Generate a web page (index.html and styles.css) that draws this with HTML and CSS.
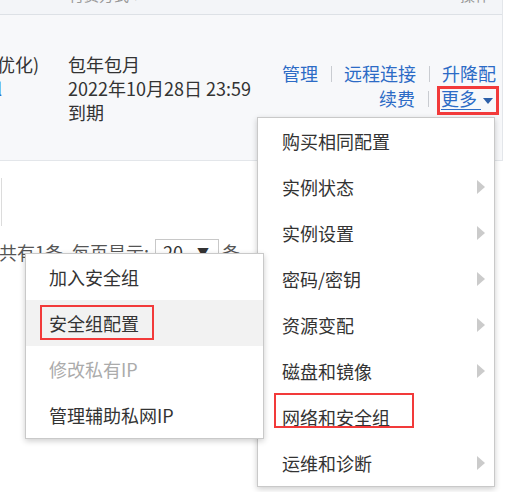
FILE: index.html
```html
<!DOCTYPE html>
<html lang="zh-CN">
<head>
<meta charset="utf-8">
<title>实例列表</title>
<link rel="stylesheet" href="styles.css">
</head>
<body>
<div class="page">
  <div class="table">
    <div class="thead">
      <span class="th th-pay">付费方式 ▾</span>
      <span class="th th-op">操作</span>
    </div>
    <div class="row">
      <div class="col c1">
        <div>优化)</div>
        <div class="link">l</div>
      </div>
      <div class="col c2">
        <div>包年包月</div>
        <div class="date">2022年10月28日 23:59</div>
        <div>到期</div>
      </div>
      <div class="col c3">
        <div class="ops">
          <a class="link">管理</a><i class="sep"></i><a class="link">远程连接</a><i class="sep"></i><a class="link">升降配</a>
        </div>
        <div class="ops">
          <a class="link">续费</a><i class="sep"></i><a class="link more">更多 <span class="caret"></span></a>
        </div>
      </div>
    </div>
  </div>

  <div class="below">
    <div class="stub"></div>
    <div class="pager">
      <div class="ptext"><span>共有1条, 每页显示:</span></div>
      <div class="select"><span>20</span><span class="sel-caret">▼</span></div>
      <span class="unit">条</span>
    </div>
  </div>

  <ul class="menu menu-main">
    <li class="item">购买相同配置</li>
    <li class="item">实例状态<i class="chev"></i></li>
    <li class="item">实例设置<i class="chev"></i></li>
    <li class="item">密码/密钥<i class="chev"></i></li>
    <li class="item">资源变配<i class="chev"></i></li>
    <li class="item">磁盘和镜像<i class="chev"></i></li>
    <li class="item">网络和安全组</li>
    <li class="item">运维和诊断<i class="chev"></i></li>
  </ul>

  <ul class="menu menu-sub">
    <li class="item">加入安全组</li>
    <li class="item active">安全组配置</li>
    <li class="item disabled">修改私有IP</li>
    <li class="item">管理辅助私网IP</li>
  </ul>

  <div class="mark mark-more"></div>
  <div class="mark mark-sg"></div>
  <div class="mark mark-net"></div>
</div>
</body>
</html>
```

FILE: styles.css
```css
* { box-sizing: border-box; }
html, body {
  margin: 0;
  padding: 0;
  background: #fff;
}
body {
  font-family: "Noto Sans CJK SC", "Microsoft YaHei", sans-serif;
  color: #333;
}
.page {
  position: relative;
  width: 508px;
  height: 492px;
  overflow: hidden;
}

/* table */
.table {
  width: 503px;
  border-right: 1px solid #e3e6ea;
}
.thead {
  display: flex;
  align-items: flex-start;
  height: 15px;
  background: #f3f5f8;
  border-bottom: 1px solid #dde1e6;
  overflow: hidden;
}
.th {
  font-size: 15px;
  line-height: 20px;
  margin-top: -15px;
  color: #999;
  white-space: nowrap;
}
.th-pay { margin-left: 69px; }
.th-op { margin-left: auto; margin-right: 12px; }

.row {
  display: flex;
  height: 146px;
  background: #f7f8fa;
  border-bottom: 1px solid #e3e6ea;
  font-size: 18px;
}
.col { white-space: nowrap; }
.c1 {
  width: 71px;
  margin-left: -3px;
  padding-top: 37px;
  line-height: 24px;
}
.c2 {
  padding-top: 37px;
  line-height: 24px;
}
.c3 {
  margin-left: auto;
  padding-top: 46px;
  padding-right: 6px;
  line-height: 25px;
}
.ops {
  display: flex;
  justify-content: flex-end;
  align-items: center;
}
.link { color: #2c6bc6; text-decoration: none; }
.sep {
  display: inline-block;
  width: 1px;
  height: 16px;
  background: #c9ccd1;
  margin: 0 12px 0 13px;
}
.more {
  text-decoration: underline;
  text-decoration-color: #2c6bc6;
  text-underline-offset: 3px;
}
.caret {
  display: inline-block;
  width: 0;
  height: 0;
  margin-left: 2px;
  margin-right: 3px;
  vertical-align: middle;
  border-left: 5px solid transparent;
  border-right: 5px solid transparent;
  border-top: 6px solid #2c5fa8;
}

/* below table */
.below {
  padding-top: 17px;
}
.stub {
  width: 2px;
  height: 48px;
  border-right: 1px solid #dcdcdc;
}
.pager {
  display: flex;
  align-items: center;
  height: 26px;
  margin-top: 13px;
  font-size: 18px;
  color: #555;
}
.ptext {
  display: flex;
  justify-content: flex-end;
  width: 149px;
  margin-right: 6px;
  white-space: nowrap;
  line-height: 26px;
}
.select {
  display: flex;
  align-items: center;
  justify-content: space-between;
  width: 64px;
  height: 26px;
  padding: 0 9px 0 7px;
  border: 1px solid #c8c8c8;
  color: #333;
  line-height: 24px;
}
.sel-caret {
  font-size: 12px;
  color: #333;
}
.unit {
  margin-left: 3px;
  line-height: 26px;
}

/* dropdown menus */
.menu {
  position: absolute;
  margin: 0;
  padding: 0;
  list-style: none;
  background: #fff;
  border: 1px solid #c9c9c9;
  box-shadow: 0 2px 6px rgba(0, 0, 0, 0.2);
  font-size: 18px;
  color: #333;
}
.menu-main {
  left: 257px;
  top: 117px;
  width: 238px;
  z-index: 2;
}
.menu-sub {
  left: 25px;
  top: 253px;
  width: 239px;
  z-index: 3;
}
.item {
  display: flex;
  align-items: center;
  justify-content: space-between;
  height: 46px;
  padding: 0 9px 0 24px;
  white-space: nowrap;
}
.menu-sub .item { padding-left: 23px; }
.item.active { background: #f2f2f2; }
.item.disabled { color: #ababab; }
.chev {
  display: inline-block;
  width: 0;
  height: 0;
  border-left: 8px solid #cbcbcb;
  border-top: 7px solid transparent;
  border-bottom: 7px solid transparent;
}

/* annotation boxes */
.mark {
  position: absolute;
  border: 2px solid #f23a3a;
  z-index: 5;
}
.mark-more {
  left: 437px;
  top: 86px;
  width: 62px;
  height: 29px;
  border-width: 3px;
}
.mark-sg {
  left: 40px;
  top: 305px;
  width: 114px;
  height: 35px;
}
.mark-net {
  left: 274px;
  top: 393px;
  width: 140px;
  height: 35px;
}
```
